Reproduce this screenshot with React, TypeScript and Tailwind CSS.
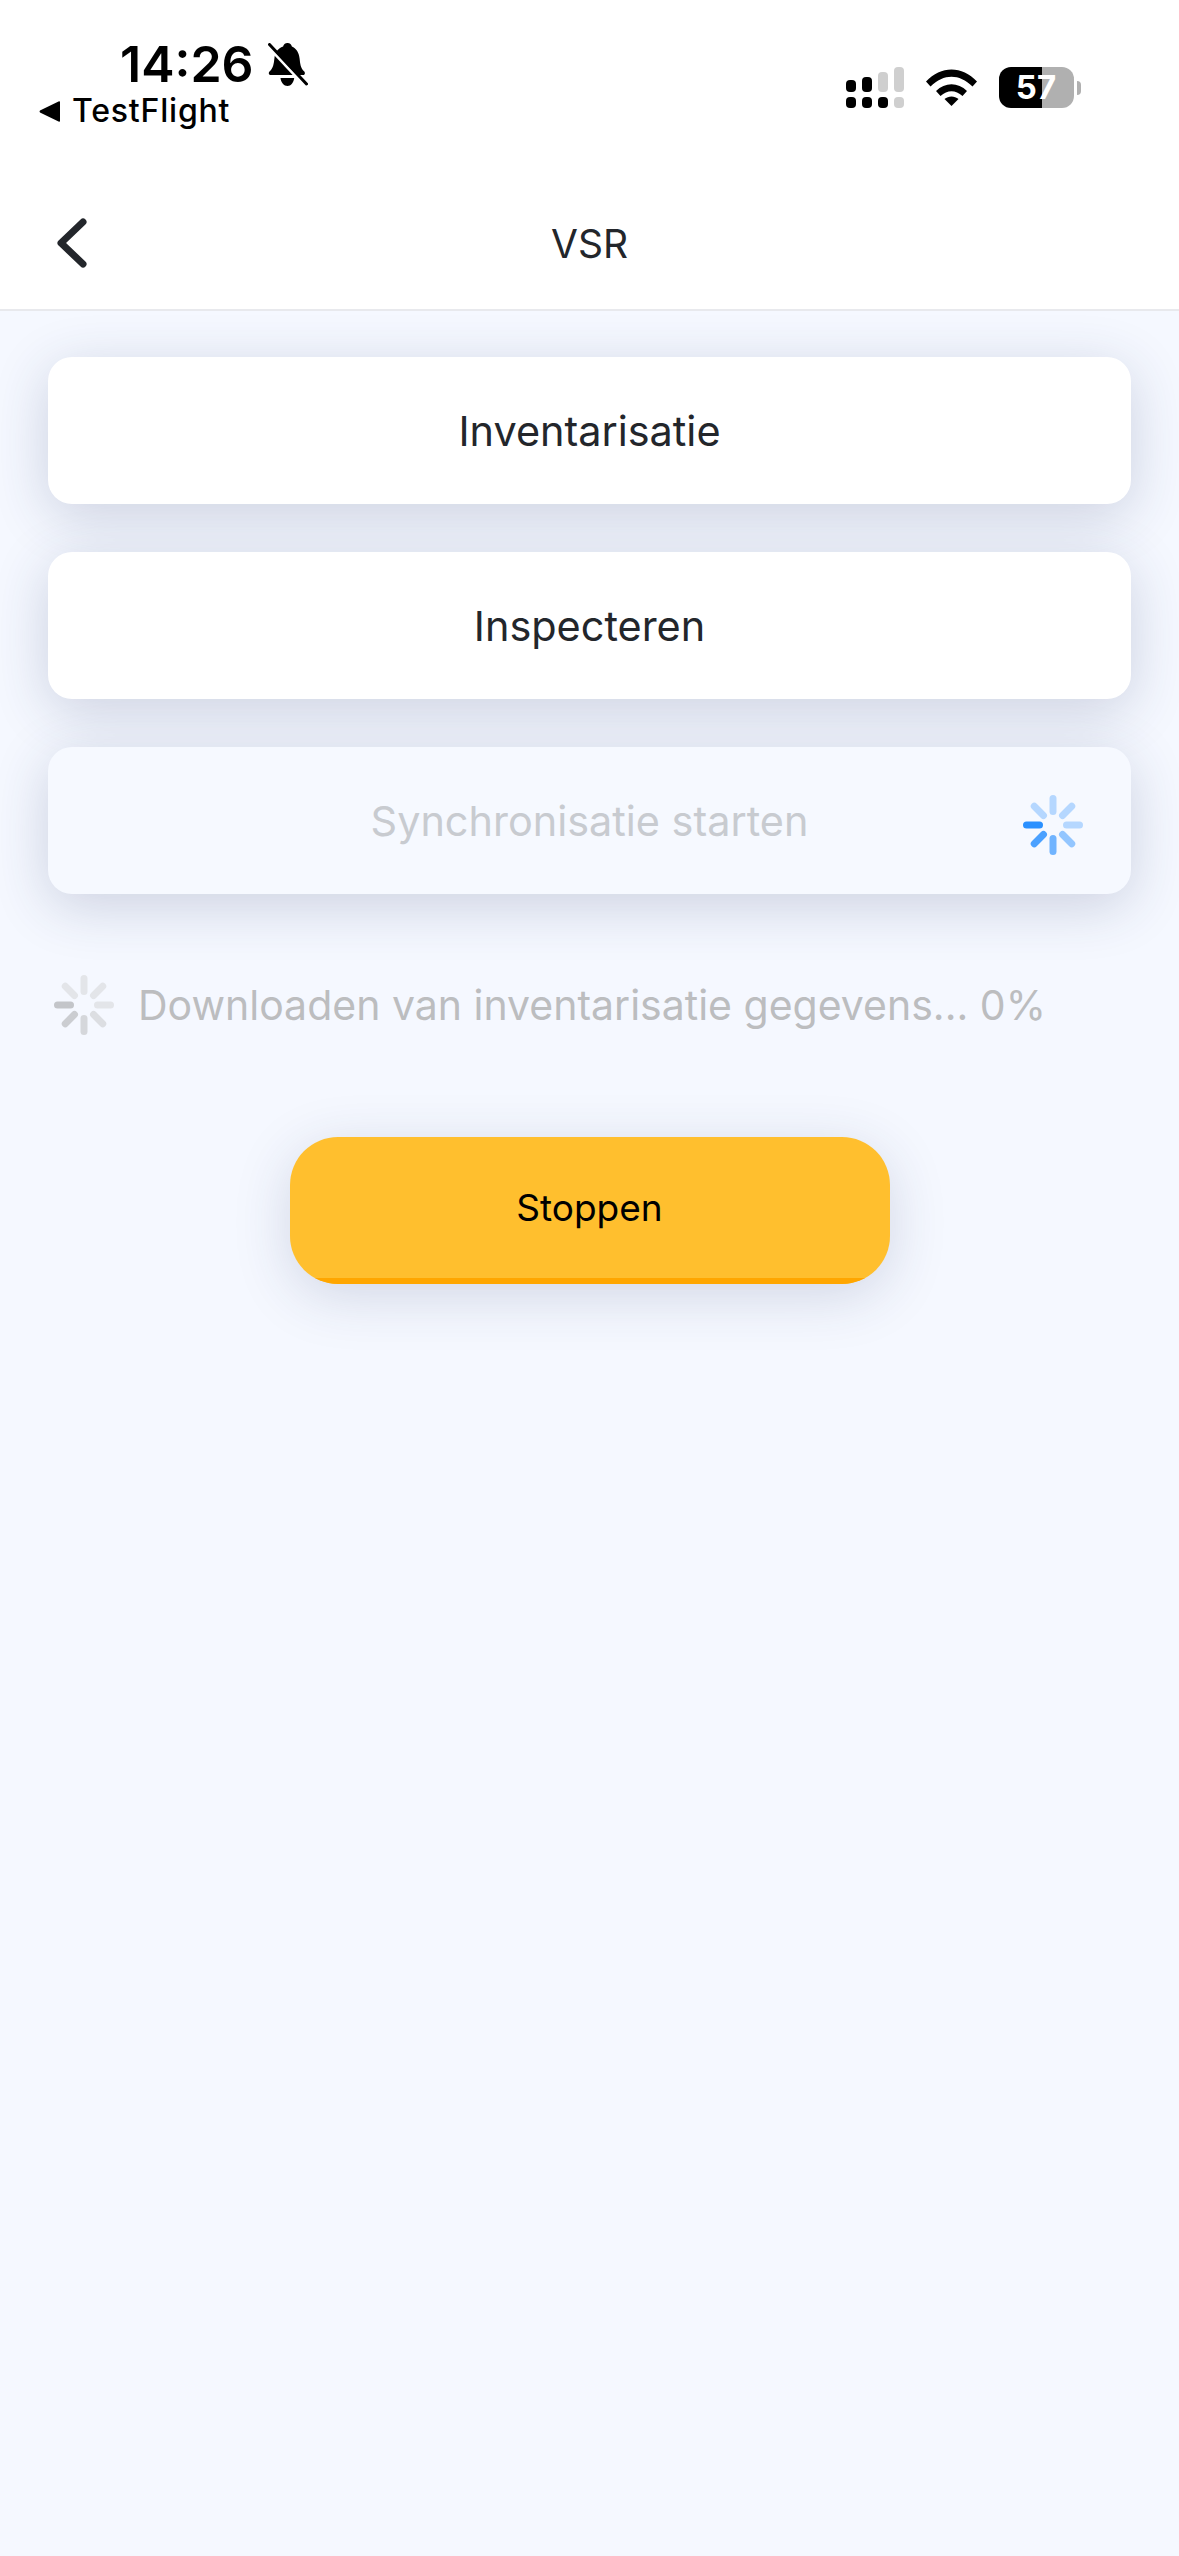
const FONT = "font-['Inter','Noto_Sans',sans-serif]";

const SPOKE_ANGLES = [0, 45, 90, 135, 180, 225, 270, 315];

// first colour is the spoke pointing left, then going counter clockwise
function Spinner({ colors }: { colors: string[] }) {
  return (
    <svg width="60" height="60" viewBox="0 0 60 60" className="block shrink-0">
      {SPOKE_ANGLES.map((angle, i) => (
        <line
          key={angle}
          x1="3.5"
          y1="30"
          x2="16.5"
          y2="30"
          stroke={colors[i]}
          strokeWidth="7"
          strokeLinecap="round"
          transform={`rotate(${-angle} 30 30)`}
        />
      ))}
    </svg>
  );
}

function SignalBars() {
  const columns = [
    { top: 'h-[12px] bg-black', bottom: 'bg-black' },
    { top: 'h-[15px] bg-black', bottom: 'bg-black' },
    { top: 'h-[20px] bg-[#cfcfcf]', bottom: 'bg-black' },
    { top: 'h-[25px] bg-[#cfcfcf]', bottom: 'bg-[#cfcfcf]' },
  ];
  return (
    <div className="flex items-end gap-[6px]">
      {columns.map((col, i) => (
        <div key={i} className="flex flex-col items-center gap-[5px]">
          <div className={`w-[10px] rounded-[4px] ${col.top}`} />
          <div className={`h-[11px] w-[10px] rounded-[4px] ${col.bottom}`} />
        </div>
      ))}
    </div>
  );
}

function Wifi() {
  return (
    <svg width="51" height="37" viewBox="0 0 51 37" className="block">
      <path d="M0 12.5 C15 -3.5 36 -3.5 51 12.5 L46.5 17.5 C33 4.5 18 4.5 4.5 17.5 Z" fill="#000" />
      <path d="M10 22 C19 13 32 13 41 22 L36.5 27 C29.5 20.5 21.5 20.5 14.5 27 Z" fill="#000" />
      <path d="M18.5 30 C22.5 26.5 28.5 26.5 32.5 30 L25.5 37 Z" fill="#000" />
    </svg>
  );
}

function Battery() {
  return (
    <div className="flex items-center gap-[3px]">
      <div className="flex h-[41px] w-[75px] items-center justify-center overflow-hidden rounded-[12px] bg-[linear-gradient(90deg,#000_0,#000_43px,#b0b0b0_43px,#b0b0b0_100%)]">
        <span className="-ml-[1px] text-[33px] leading-none font-bold text-white">57</span>
      </div>
      <div className="h-[14px] w-[4px] rounded-r-full bg-[#b0b0b0]" />
    </div>
  );
}

function BellSlash() {
  return (
    <svg width="40" height="43" viewBox="0 0 40 43" className="block">
      <path
        d="M19.5 0 C17 0 15.5 1.6 15.1 3.6 C10 5.2 7 9.5 6.4 15.5 C5.8 20.5 5.4 25 1.8 28.2 C0 29.8 0.8 32 3 32 L35 32 C37 32 37.6 29.8 36 28.2 C32.4 25 32.2 20.5 31.6 15.5 C31 9.5 28 5.2 23.9 3.6 C23.5 1.6 22 0 19.5 0 Z M12.5 35 C13 39.6 16 43 19.5 43 C23 43 25.6 39.6 26.2 35 Z"
        fill="#000"
      />
      <path d="M1.5 5 L35 41" stroke="#fff" strokeWidth="3" />
      <path d="M1.5 1.5 L38.5 41" stroke="#000" strokeWidth="3" strokeLinecap="round" />
    </svg>
  );
}

function StatusBar() {
  return (
    <div className="flex h-[165px] items-start justify-between bg-white">
      <div className="flex flex-col pt-[39px] pl-[39px]">
        <div className="flex items-center gap-[14px] pl-[81px]">
          <span className="text-[50px] leading-[50px] font-semibold text-black">14:26</span>
          <BellSlash />
        </div>
        <div className="mt-[3px] flex items-center gap-[12px]">
          <svg width="21" height="21" viewBox="0 0 21 21" className="block">
            <path d="M21 1 L21 20 Q21 21 19.5 20.5 L1 11.5 Q0 10.5 1 9.5 L19.5 0.5 Q21 0 21 1 Z" fill="#000" />
          </svg>
          <span className="text-[32px] leading-[38px] font-medium tracking-[0.8px] text-black">TestFlight</span>
        </div>
      </div>
      <div className="flex items-center gap-[22px] pt-[67px] pr-[98px]">
        <SignalBars />
        <Wifi />
        <Battery />
      </div>
    </div>
  );
}

function NavBar() {
  return (
    <div className="grid h-[146px] grid-cols-[1fr_auto_1fr] items-center border-b-[2px] border-[#e8e9ed] bg-white pt-[12px]">
      <div className="pl-[57px]">
        <svg width="30" height="50" viewBox="0 0 30 50" className="block">
          <path d="M26 4 L4 25 L26 46" fill="none" stroke="#23262b" strokeWidth="7" strokeLinecap="round" strokeLinejoin="round" />
        </svg>
      </div>
      <span className="text-[39px] leading-none text-[#23262b]">VSR</span>
      <div />
    </div>
  );
}

function MenuCard({ label }: { label: string }) {
  return (
    <div className="flex h-[147px] items-center justify-center rounded-[24px] bg-white pt-[2px] shadow-[0_12px_56px_rgba(40,55,100,0.2)]">
      <span className="text-[41.4px] leading-none text-[#23262b]">{label}</span>
    </div>
  );
}

export default function App() {
  return (
    <div className={`${FONT} flex min-h-[2556px] w-[1179px] flex-col bg-[#f5f8ff]`}>
      <StatusBar />
      <NavBar />

      <div className="flex flex-col px-[48px] pt-[46px]">
        <div className="flex flex-col gap-[48px]">
          <MenuCard label="Inventarisatie" />
          <MenuCard label="Inspecteren" />
          <div className="grid h-[147px] grid-cols-[1fr_auto_1fr] items-center rounded-[24px] bg-[#f6f9ff] pt-[2px] shadow-[0_12px_56px_rgba(40,55,100,0.2)]">
            <div />
            <span className="text-[41.4px] leading-none text-[#c8cbd0]">Synchronisatie starten</span>
            <div className="mt-[7px] justify-self-end pr-[48px]">
              <Spinner colors={['#2a90ff', '#4ba1ff', '#70b4ff', '#93c6ff', '#b5d7ff', '#b5d7ff', '#b5d7ff', '#b5d7ff']} />
            </div>
          </div>
        </div>

        <div className="mt-[81px] flex items-center gap-[25px] pl-[6px]">
          <Spinner colors={['#c3c5c9', '#cbcdd1', '#d5d7db', '#dcdee2', '#e3e5e9', '#e3e5e9', '#e3e5e9', '#e3e5e9']} />
          <span className="-ml-[1px] text-[41px] leading-none text-[#bcbdbf]">Downloaden van inventarisatie gegevens... 0%</span>
        </div>

        <div className="mt-[102px] flex justify-center">
          <div className="flex h-[147px] w-[600px] flex-col overflow-hidden rounded-[48px] bg-[#ffbf2e] shadow-[0_12px_56px_rgba(40,55,100,0.17)]">
            <div className="flex flex-1 items-center justify-center">
              <span className="text-[37px] leading-none text-black">Stoppen</span>
            </div>
            <div className="h-[6px] bg-[#ffa600]" />
          </div>
        </div>
      </div>
    </div>
  );
}
